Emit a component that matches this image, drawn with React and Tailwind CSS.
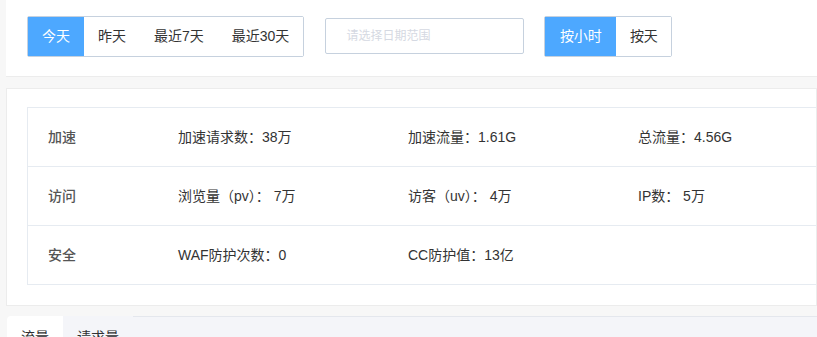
import { useState } from 'react';

const font = { fontFamily: '"Liberation Sans", "Noto Sans CJK SC", sans-serif' };

const rows = [
  { label: '加速', cells: ['加速请求数：38万', '加速流量：1.61G', '总流量：4.56G'] },
  { label: '访问', cells: ['浏览量（pv）： 7万', '访客（uv）： 4万', 'IP数： 5万'] },
  { label: '安全', cells: ['WAF防护次数：0', 'CC防护值：13亿', ''] },
];

export default function App() {
  const [range, setRange] = useState('今天');
  const [unit, setUnit] = useState('按小时');
  const [tab, setTab] = useState('流量');

  return (
    <div className="min-h-screen w-[817px] overflow-hidden bg-[#f7f7f7] pl-[6px] text-[14px] text-[#333]" style={font}>
      {/* Filter bar */}
      <div className="flex h-[77px] items-start border-b border-[#ececec] bg-white pl-[21px] pt-[16px]">
        <div className="flex h-[41px] rounded-[2px] border border-[#c6d1de]">
          {['今天', '昨天', '最近7天', '最近30天'].map((r) => (
            <button
              key={r}
              onClick={() => setRange(r)}
              className={
                'px-[14px] leading-[39px] ' +
                (range === r ? 'bg-[#4da8ff] text-white' : 'bg-white text-[#333]')
              }
            >
              {r}
            </button>
          ))}
        </div>
        <div className="ml-[21px] mt-[2px] flex h-[36px] w-[199px] items-center rounded-[2px] border border-[#c6d1de] pl-[20px] text-[12px] text-[#d5d9e2]">
          请选择日期范围
        </div>
        <div className="ml-[20px] flex h-[41px] rounded-[2px] border border-[#c6d1de]">
          {['按小时', '按天'].map((u) => (
            <button
              key={u}
              onClick={() => setUnit(u)}
              className={
                'leading-[39px] ' +
                (u === '按小时' ? 'w-[71px] ' : 'w-[55px] ') +
                (unit === u ? 'bg-[#4da8ff] text-white' : 'bg-white text-[#333]')
              }
            >
              {u}
            </button>
          ))}
        </div>
      </div>

      {/* Stats card */}
      <div className="mt-[11px] border border-[#ececec] bg-white pb-[20px] pl-[20px] pt-[18px]">
        <div className="border-l border-t border-[#e6ebf1]">
          {rows.map((row) => (
            <div key={row.label} className="flex h-[59px] items-center border-b border-[#e6ebf1]">
              <div className="w-[130px] shrink-0 pl-[20px] font-medium text-[#555]">{row.label}</div>
              {row.cells.map((c, i) => (
                <div key={i} className="w-[230px] shrink-0 whitespace-pre pl-[20px] text-[#333]">
                  {c}
                </div>
              ))}
            </div>
          ))}
        </div>
      </div>

      {/* Tabs */}
      <div className="mt-[10px] flex h-[40px] pl-[1px]">
        {['流量', '请求量'].map((t) => (
          <div
            key={t}
            onClick={() => setTab(t)}
            className={
              'cursor-pointer px-[14px] pt-[11px] text-[#303133] ' +
              (tab === t ? 'rounded-tl-[4px] bg-white' : 'bg-[#f4f5f9]')
            }
          >
            {t}
          </div>
        ))}
        <div className="flex-1 border-t border-[#e4e7ed] bg-[#f4f5f9]" />
      </div>
    </div>
  );
}
